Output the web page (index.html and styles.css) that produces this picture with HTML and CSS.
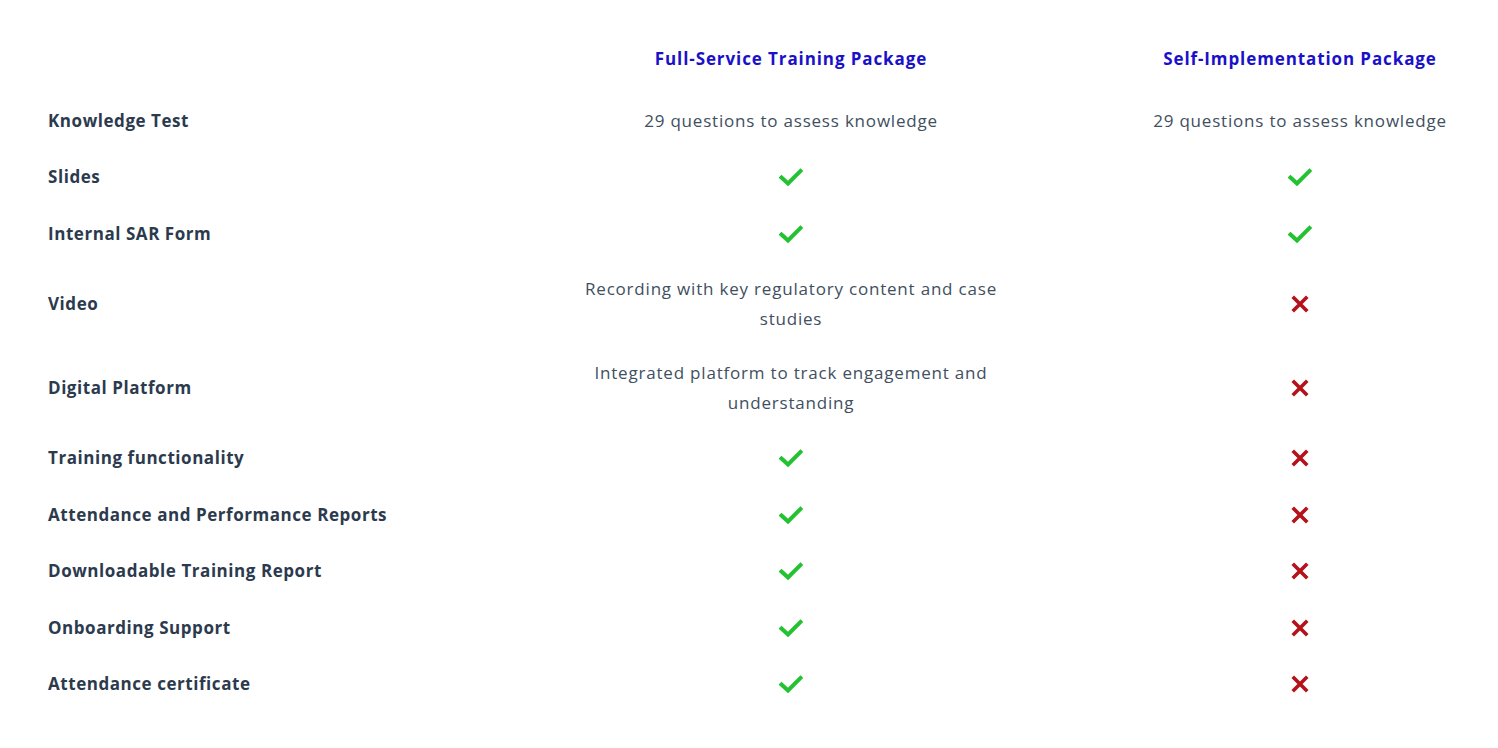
FILE: index.html
```html
<!DOCTYPE html>
<html lang="en">
<head>
<meta charset="utf-8">
<title>Training Packages</title>
<link rel="stylesheet" href="styles.css">
</head>
<body>
<div class="compare">
  <div class="cell head"></div>
  <div class="cell head">Full-Service Training Package</div>
  <div class="cell head">Self-Implementation Package</div>

  <div class="cell label">Knowledge Test</div>
  <div class="cell val">29 questions to assess knowledge</div>
  <div class="cell val">29 questions to assess knowledge</div>

  <div class="cell label">Slides</div>
  <div class="cell val"><svg class="ico check" viewBox="0 0 24 18"><path d="M2.5 9.5 L9 15.5 L21.5 3"/></svg></div>
  <div class="cell val"><svg class="ico check" viewBox="0 0 24 18"><path d="M2.5 9.5 L9 15.5 L21.5 3"/></svg></div>

  <div class="cell label">Internal SAR Form</div>
  <div class="cell val"><svg class="ico check" viewBox="0 0 24 18"><path d="M2.5 9.5 L9 15.5 L21.5 3"/></svg></div>
  <div class="cell val"><svg class="ico check" viewBox="0 0 24 18"><path d="M2.5 9.5 L9 15.5 L21.5 3"/></svg></div>

  <div class="cell label">Video</div>
  <div class="cell val">Recording with key regulatory content and case studies</div>
  <div class="cell val"><svg class="ico cross" viewBox="0 0 18 18"><path d="M3 3 L15 15 M15 3 L3 15"/></svg></div>

  <div class="cell label">Digital Platform</div>
  <div class="cell val">Integrated platform to track engagement and understanding</div>
  <div class="cell val"><svg class="ico cross" viewBox="0 0 18 18"><path d="M3 3 L15 15 M15 3 L3 15"/></svg></div>

  <div class="cell label">Training functionality</div>
  <div class="cell val"><svg class="ico check" viewBox="0 0 24 18"><path d="M2.5 9.5 L9 15.5 L21.5 3"/></svg></div>
  <div class="cell val"><svg class="ico cross" viewBox="0 0 18 18"><path d="M3 3 L15 15 M15 3 L3 15"/></svg></div>

  <div class="cell label">Attendance and Performance Reports</div>
  <div class="cell val"><svg class="ico check" viewBox="0 0 24 18"><path d="M2.5 9.5 L9 15.5 L21.5 3"/></svg></div>
  <div class="cell val"><svg class="ico cross" viewBox="0 0 18 18"><path d="M3 3 L15 15 M15 3 L3 15"/></svg></div>

  <div class="cell label">Downloadable Training Report</div>
  <div class="cell val"><svg class="ico check" viewBox="0 0 24 18"><path d="M2.5 9.5 L9 15.5 L21.5 3"/></svg></div>
  <div class="cell val"><svg class="ico cross" viewBox="0 0 18 18"><path d="M3 3 L15 15 M15 3 L3 15"/></svg></div>

  <div class="cell label">Onboarding Support</div>
  <div class="cell val"><svg class="ico check" viewBox="0 0 24 18"><path d="M2.5 9.5 L9 15.5 L21.5 3"/></svg></div>
  <div class="cell val"><svg class="ico cross" viewBox="0 0 18 18"><path d="M3 3 L15 15 M15 3 L3 15"/></svg></div>

  <div class="cell label">Attendance certificate</div>
  <div class="cell val"><svg class="ico check" viewBox="0 0 24 18"><path d="M2.5 9.5 L9 15.5 L21.5 3"/></svg></div>
  <div class="cell val"><svg class="ico cross" viewBox="0 0 18 18"><path d="M3 3 L15 15 M15 3 L3 15"/></svg></div>
</div>
</body>
</html>
```
FILE: styles.css
```css
html, body {
  margin: 0;
  padding: 0;
  background: #ffffff;
}
body {
  font-family: "Open Sans", "DejaVu Sans", sans-serif;
  font-size: 17px;
  color: #3e4c5e;
}
.compare {
  display: grid;
  grid-template-columns: 432px 460px 396px;
  column-gap: 81px;
  padding: 25px 0 0 48px;
}
.cell {
  line-height: 30px;
  padding: 12px 0;
  min-height: 56.5px;
  box-sizing: border-box;
  display: flex;
  align-items: center;
}
.head {
  height: 67.5px;
  padding: 0;
  justify-content: center;
  font-weight: 700;
  color: #1a10c9;
  font-size: 17px;
  letter-spacing: 0.9px;
}
.label {
  font-weight: 700;
  color: #2c3a4e;
  font-size: 17px;
  letter-spacing: 0.55px;
}
.val {
  justify-content: center;
  text-align: center;
  font-weight: 400;
  color: #414f60;
  letter-spacing: 0.8px;
}
.ico {
  display: block;
  fill: none;
  stroke-linecap: square;
}
.check {
  width: 24px;
  height: 18px;
  stroke: #22c230;
  stroke-width: 4;
}
.cross {
  width: 18px;
  height: 18px;
  stroke: #b5121b;
  stroke-width: 3.6;
}
```
